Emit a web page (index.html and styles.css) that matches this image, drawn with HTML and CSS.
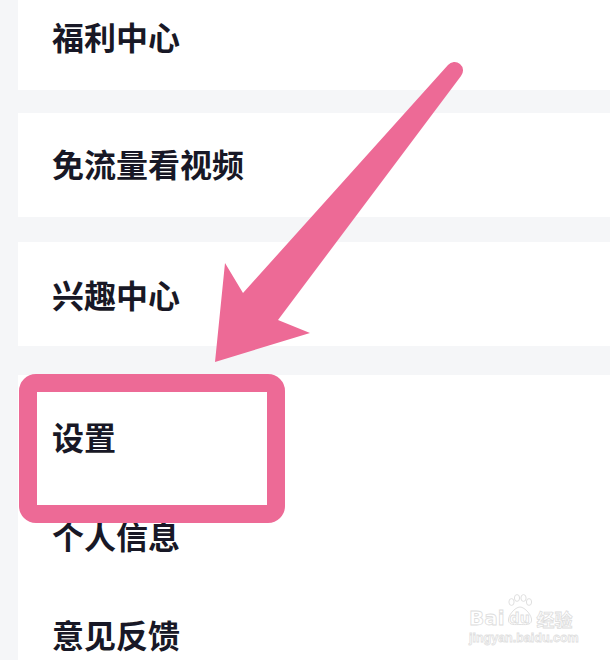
FILE: index.html
```html
<!DOCTYPE html>
<html lang="zh-CN">
  <head>
    <meta charset="UTF-8" />
    <meta name="viewport" content="width=device-width, initial-scale=1.0" />
    <title>我的</title>
    <link rel="stylesheet" href="styles.css">
  </head>
  <body>
    <div class="page">
      <div class="menu">
        <div class="card"><span class="label">福利中心</span></div>
        <div class="card"><span class="label">免流量看视频</span></div>
        <div class="card card-last"><span class="label">兴趣中心</span></div>
        <div class="group">
          <div class="row"><span class="label">设置</span></div>
          <div class="row"><span class="label">个人信息</span></div>
          <div class="row"><span class="label">意见反馈</span></div>
        </div>
      </div>

      <!-- 标注：箭头和方框 -->
      <svg class="marks" width="610" height="660" viewBox="0 0 610 660">
        <path class="arrow" d="M 448 65 L 243 293 L 225 263 L 215 362 L 310 333 L 278 320 L 461 76 A 8.5 8.5 0 0 0 448 65 Z" />
        <rect class="frame" x="28" y="383" width="248" height="131" rx="8" />
      </svg>

      <div class="watermark">
        <div class="wm-top">
          <span class="wm-bai">Bai</span>
          <span class="wm-paw">
            <svg width="26" height="32" viewBox="0 0 26 32">
              <ellipse cx="4.5" cy="8" rx="2.6" ry="3.4" />
              <ellipse cx="10" cy="4" rx="2.6" ry="3.4" />
              <ellipse cx="16.5" cy="4" rx="2.6" ry="3.4" />
              <ellipse cx="22" cy="8" rx="2.6" ry="3.4" />
              <path d="M 13 13 C 18 13 25.5 22 24.5 27 C 23.5 31.5 18 30.5 13 30.5 C 8 30.5 2.5 31.5 1.5 27 C 0.5 22 8 13 13 13 Z" />
            </svg>
            <span class="wm-du">du</span>
          </span>
          <span class="wm-jy">经验</span>
        </div>
        <div class="wm-url">jingyan.baidu.com</div>
      </div>
    </div>
  </body>
</html>
```

FILE: styles.css
```css
/* 全局 */
body {
  margin: 0;
  padding: 0;
  background-color: #f5f6f8;
  font-family: "Noto Sans CJK SC", "Noto Sans", sans-serif;
  color: #181826;
}

.page {
  position: relative;
  width: 610px;
  height: 660px;
  overflow: hidden;
}

.menu {
  display: flex;
  flex-direction: column;
  gap: 23px;
  margin-top: -14px;
  padding-left: 18px;
}

.card {
  height: 104px;
  box-sizing: border-box;
  background-color: #ffffff;
  display: flex;
  align-items: center;
  padding-left: 34px;
  padding-bottom: 4px;
}

.card-last {
  margin-top: 2px;
  padding-bottom: 0;
}

.label {
  font-size: 32px;
  font-weight: 700;
  line-height: 1;
}

.group {
  margin-top: 6px;
  background-color: #ffffff;
  padding-top: 13px;
  display: flex;
  flex-direction: column;
}

.row {
  height: 99px;
  box-sizing: border-box;
  display: flex;
  align-items: center;
  padding-left: 34px;
  padding-bottom: 4px;
}

/* 标注 */
.marks {
  position: absolute;
  top: 0;
  left: 0;
  pointer-events: none;
}

.arrow {
  fill: #ed6a96;
}

.frame {
  fill: none;
  stroke: #ed6a96;
  stroke-width: 18;
}

/* 水印 */
.watermark {
  position: absolute;
  left: 469px;
  top: 594px;
  display: flex;
  flex-direction: column;
  gap: 6px;
  color: #ffffff;
}

.wm-top {
  display: flex;
  align-items: flex-end;
  height: 32px;
}

.wm-bai,
.wm-du {
  font-family: "DejaVu Sans", sans-serif;
  font-size: 20px;
  font-weight: 700;
  line-height: 0.75;
  -webkit-text-stroke: 0.8px #dddddd;
}

.wm-paw {
  position: relative;
  width: 26px;
  height: 32px;
  margin-left: 2px;
}

.wm-paw svg {
  position: absolute;
  top: 0;
  left: 0;
}

.wm-paw svg ellipse,
.wm-paw svg path {
  fill: #ffffff;
  stroke: #e0e0e0;
  stroke-width: 1;
}

.wm-du {
  position: absolute;
  left: 3px;
  bottom: 3px;
  font-size: 14px;
}

.wm-jy {
  font-size: 18px;
  font-weight: 700;
  line-height: 1;
  margin-left: 4px;
  margin-bottom: -2px;
  -webkit-text-stroke: 0.8px #dddddd;
}

.wm-url {
  font-family: "Liberation Sans", sans-serif;
  font-size: 12.5px;
  font-weight: 700;
  line-height: 1;
  -webkit-text-stroke: 0.8px #e0e0e0;
}
```
